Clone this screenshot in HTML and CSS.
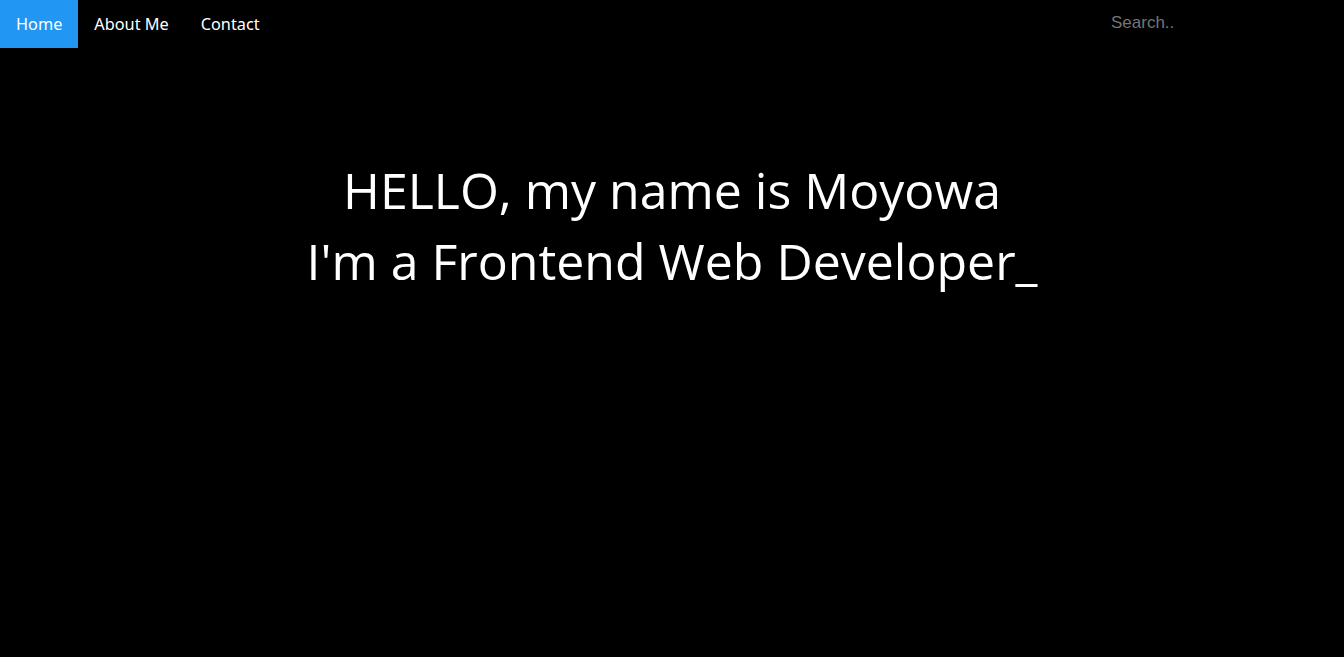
FILE: index.html
```html
<!DOCTYPE html>
<html lang="en">
<head>
<meta charset="utf-8">
<title>Moyowa</title>
<link rel="stylesheet" href="styles.css">
</head>
<body>
<nav class="topnav">
  <a class="nav-link active" href="#home">Home</a>
  <a class="nav-link" href="#about">About Me</a>
  <a class="nav-link" href="#contact">Contact</a>
  <input class="search" type="text" placeholder="Search..">
</nav>
<main class="hero">
  <h1 class="hero-title">HELLO, my name is Moyowa<br>I'm a Frontend Web Developer_</h1>
</main>
</body>
</html>
```

FILE: styles.css
```css
html, body {
  margin: 0;
  padding: 0;
  background: #000;
  height: 100%;
}
body {
  font-family: "Noto Sans", "Open Sans", sans-serif;
}
.topnav {
  display: flex;
  align-items: flex-start;
  height: 48px;
}
.nav-link {
  display: block;
  padding: 14px 16px 14px;
  font-family: "Noto Sans", "Open Sans", sans-serif;
  font-size: 16.3px;
  line-height: 20px;
  color: #fff;
  text-decoration: none;
}
.nav-link.active {
  background: #2196F3;
}
.search {
  margin-left: auto;
  margin-right: 16px;
  margin-top: 7px;
  padding: 6px;
  width: 211px;
  border: none;
  background: #000;
  color: #ccc;
  font-family: "Liberation Sans", Arial, sans-serif;
  font-size: 17px;
  outline: none;
}
.search::placeholder {
  color: #757575;
}
.hero {
  padding-top: 107px;
  text-align: center;
}
.hero-title {
  margin: 0;
  color: #fff;
  font-family: "Comic Sans MS", "Open Sans", sans-serif;
  font-weight: normal;
  font-size: 50px;
  line-height: 71px;
}
```
